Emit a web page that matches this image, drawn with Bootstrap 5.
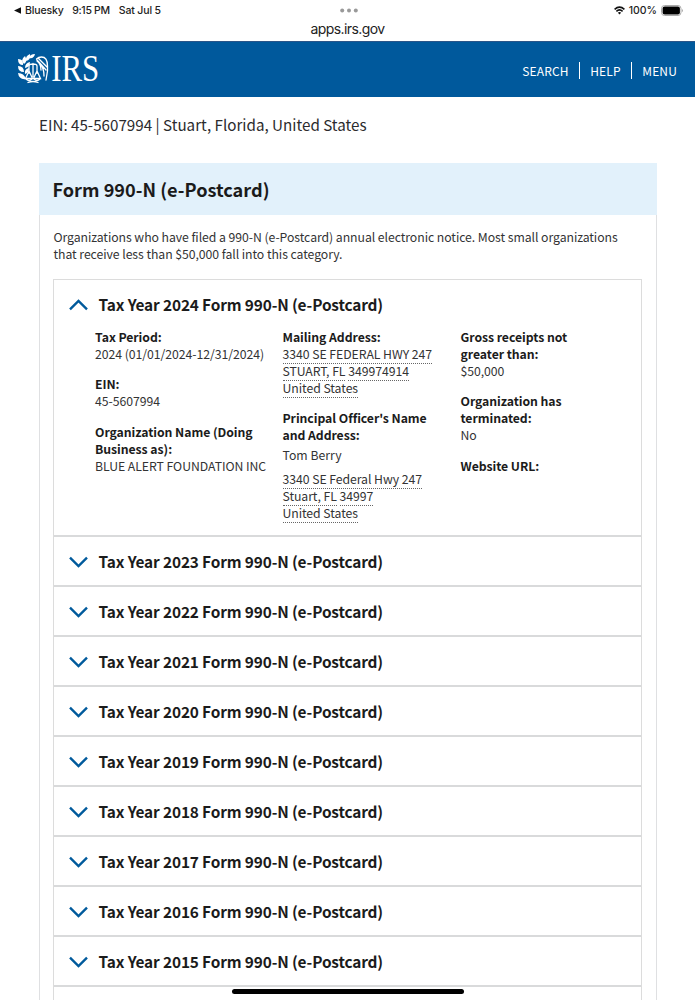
<!DOCTYPE html>
<html lang="en">
<head>
<meta charset="utf-8">
<meta name="viewport" content="width=device-width, initial-scale=1">
<title>Form 990-N (e-Postcard)</title>
<link href="https://cdn.jsdelivr.net/npm/bootstrap@5.3.0/dist/css/bootstrap.min.css" rel="stylesheet">
<style>
  body { font-family: "Noto Sans CJK SC", "Open Sans", sans-serif; font-size: 12.25px; line-height: 17px; color: #333334; height: 1000px; overflow: hidden; position: relative; }
  .ios-bar { height: 41px; font-family: Inter, "Liberation Sans", sans-serif; color: #222; }
  .ios-row { height: 21px; font-size: 10.5px; font-weight: 500; line-height: 21px; padding: 0 12px 0 14px; }
  .ios-row > div { flex: 1 1 0; }
  .ios-left { letter-spacing: -.14px; }
  .ios-time { margin: 0 9px 0 8.5px; letter-spacing: -.3px; }
  .ios-url { font-size: 14px; line-height: 15px; letter-spacing: -.6px; }
  .irs-nav { height: 56px; background: #00599c; padding: 0 18px 0 17px; border-top: 1px solid #2a5588; }
  .irs-links { margin: 2px -10.5px 0 0; }
  .irs-links a { font-size: 12px; line-height: 17px; letter-spacing: .15px; padding: 0 10.5px 0 10px; }
  .irs-links a + a { border-left: 1px solid #fff; }
  .ein-line { font-size: 15.2px; line-height: 24px; padding: 15px 39px 0; color: #2b2b2d; height: 66px; }
  .form-panel { margin: 0 38px 0 39px; border: 1px solid #dfe0e2; border-top: 0; height: 860px; }
  .form-panel-head { margin: 0 -1px; height: 52px; padding: 0 13.5px; background: #e2f1fb; }
  .form-panel-head h1 { font-size: 18.15px; line-height: 52px; color: #1b1b1b; }
  .intro { padding: 14px 14px 0; margin-left: -.5px; height: 64px; letter-spacing: -.06px; }
  .years { margin: 0 14px 0 13px; border: 1px solid #dcdcdc; }
  .year-item { border-bottom: 2px solid #d9dadb; }
  .year-head { height: 48px; padding-left: 15px; }
  .year-head h2 { font-size: 15.4px; line-height: 47px; letter-spacing: -.14px; color: #1b1b1b; margin-left: 10.5px; }
  .year-head svg { margin-top: 1px; }
  .year-open { height: 257px; }
  .year-cols { padding: 1px 0 0 41px; }
  .col-a { width: 187.5px; } .col-b { width: 178px; } .col-c { width: 130px; }
  .fld { margin-bottom: 13.4px; letter-spacing: -.05px; }
  .fld b, .officer b { display: block; color: #1b1b1b; }
  .officer, .officer-home { letter-spacing: -.06px; }
  .officer-name { margin: 3px 0 7px; }
  .dots { border-bottom: 1px dotted #666; }
  .home-bar { position: absolute; left: 232px; top: 989px; width: 232px; height: 5px; border-radius: 3px; background: #000; }
</style>
</head>
<body>
<header class="ios-bar bg-white">
  <div class="ios-row d-flex align-items-center">
    <div class="ios-left d-flex align-items-center"><svg width="7" height="7" viewBox="0 0 7 7"><path d="M7 .2v6.6L0 3.5z" fill="#111"/></svg><span class="ms-1">Bluesky</span><span class="ios-time">9:15 PM</span><span>Sat Jul 5</span></div>
    <svg width="18" height="5" viewBox="0 0 18 5" fill="#999"><circle cx="2.2" cy="2.5" r="2"/><circle cx="9" cy="2.5" r="2"/><circle cx="15.8" cy="2.5" r="2"/></svg>
    <div class="d-flex align-items-center justify-content-end">
      <svg width="11" height="9" viewBox="0 0 11 9" fill="none" stroke="#111" stroke-width="1.6"><path d="M.6 3.3Q5.5-1.2 10.4 3.3M2.4 5.3Q5.5 2.6 8.6 5.3"/><path d="M3.9 6.7Q5.5 5.5 7.1 6.7L5.5 8.5z" fill="#111" stroke="none"/></svg>
      <span class="mx-1">100%</span>
      <svg width="22" height="11" viewBox="0 0 22 11"><rect x=".5" y=".5" width="19.5" height="10" rx="3" fill="#fff" stroke="#aaa"/><rect x="1.6" y="1.6" width="17.3" height="7.8" rx="2" fill="#000"/><path d="M21 4v3q1-.5 1-1.5T21 4" fill="#aaa"/></svg>
    </div>
  </div>
  <div class="ios-url text-center">apps.irs.gov</div>
</header>
<nav class="irs-nav d-flex align-items-center justify-content-between">
  <svg width="90" height="46" viewBox="0 -7 90 46" fill="none" stroke="#fff" stroke-linecap="round">
    <g fill="#fff" stroke="none" transform="translate(1 0)">
      <path d="M0 5q6 0 5 6Q0 11 0 5zM0 12q6 0 6 6Q0 18 0 12zM0 19q6 0 8 6Q1 26 0 19zM7 2Q2 6 6 10 10 7 7 2zM12 0Q7 2 8 7 13 6 12 0zM17 0Q12 0 11 4 16 5 17 0zM12 8Q7 9 7 14 12 13 12 8zM11 14Q6 15 7 20 11 19 11 14z"/>
    </g>
    <path stroke-width="1.3" d="M16 9.500v13M12 12q0-2 4-2t4 2v7M12 12v7M12 17l-3.500 7.500h7zM20 17l-3.500 7.500h7zM9 25q3 3 6 0M17 25q3 3 6 0M11 28.500q5-2 10 0M19.500 5q2-2 5-2 6 0 6 9v5l-1.500 9M20 6l9 10M21 4l9 9M20 7q4 3 4 9M22 8q5 5 5 14"/>
    <text x="34.200" y="26.700" textLength="48" lengthAdjust="spacingAndGlyphs" font-family="Liberation Serif, serif" font-size="37" fill="#fff" stroke="none">IRS</text>
  </svg>
  <div class="irs-links d-flex"><a class="text-white text-decoration-none">SEARCH</a><a class="text-white text-decoration-none">HELP</a><a class="text-white text-decoration-none">MENU</a></div>
</nav>
<p class="ein-line m-0">EIN: 45-5607994 | Stuart, Florida, United States</p>
<main class="form-panel">
  <div class="form-panel-head"><h1 class="fw-bold m-0">Form 990-N (e-Postcard)</h1></div>
  <p class="intro mb-0">Organizations who have filed a 990-N (e-Postcard) annual electronic notice. Most small organizations<br>that receive less than $50,000 fall into this category.</p>
  <div class="years" id="years">
    <section class="year-item year-open">
      <div class="year-head d-flex align-items-center"><svg width="19" height="12" viewBox="0 0 19 12" fill="none" stroke="#005a9c" stroke-width="2.4"><path d="M1 10.300 9.500 2 18 10.300"/></svg><h2 class="fw-bold mb-0">Tax Year 2024 Form 990-N (e-Postcard)</h2></div>
      <div class="year-cols d-flex text-nowrap">
        <div class="col-a">
          <div class="fld"><b>Tax Period:</b>2024 (01/01/2024-12/31/2024)</div>
          <div class="fld"><b>EIN:</b>45-5607994</div>
          <div class="fld"><b>Organization Name (Doing<br>Business as):</b>BLUE ALERT FOUNDATION INC</div>
        </div>
        <div class="col-b">
          <div class="fld"><b>Mailing Address:</b><span class="dots">3340 SE FEDERAL HWY 247</span><br><span class="dots">STUART, FL</span> <span class="dots">349974914</span><br><span class="dots">United States</span></div>
          <div class="officer"><b>Principal Officer's Name<br>and Address:</b></div>
          <div class="officer-name">Tom Berry</div>
          <div class="officer-home"><span class="dots">3340 SE Federal Hwy 247</span><br><span class="dots">Stuart, FL</span> <span class="dots">34997</span><br><span class="dots">United States</span></div>
        </div>
        <div class="col-c">
          <div class="fld"><b>Gross receipts not<br>greater than:</b>$50,000</div>
          <div class="fld"><b>Organization has<br>terminated:</b>No</div>
          <div class="fld"><b>Website URL:</b></div>
        </div>
      </div>
    </section>
  </div>
</main>
<div class="home-bar"></div>
<script src="https://cdn.jsdelivr.net/npm/bootstrap@5.3.0/dist/js/bootstrap.bundle.min.js"></script>
<script>
  const years = document.getElementById('years');
  for (let y = 2023; y >= 2015; y--) {
    years.insertAdjacentHTML('beforeend', `<section class="year-item"><div class="year-head d-flex align-items-center"><svg width="19" height="12" viewBox="0 0 19 12" fill="none" stroke="#005a9c" stroke-width="2.4"><path d="M1 1.700 9.500 10 18 1.700"/></svg><h2 class="fw-bold mb-0">Tax Year ${y} Form 990-N (e-Postcard)</h2></div></section>`);
  }
  years.insertAdjacentHTML('beforeend', '<section class="year-item"><div class="year-head"></div></section>');
</script>
</body>
</html>
